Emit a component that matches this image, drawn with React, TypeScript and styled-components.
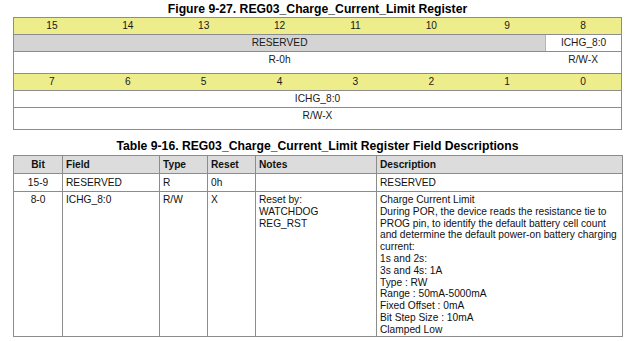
import React from "react";
import styled, { createGlobalStyle } from "styled-components";

const GlobalStyle = createGlobalStyle`
  body {
    margin: 0;
    background: #ffffff;
    font-family: "Liberation Sans", Arial, sans-serif;
    color: #111111;
  }
`;

type Tone = "yellow" | "gray" | "white";

const TONES: Record<Tone, string> = {
  yellow: "#eded8c",
  gray: "#d4d4d4",
  white: "#ffffff",
};

const BITS_HIGH = ["15", "14", "13", "12", "11", "10", "9", "8"];
const BITS_LOW = ["7", "6", "5", "4", "3", "2", "1", "0"];

const DESCRIPTION = [
  "Charge Current Limit",
  "During POR, the device reads the resistance tie to",
  "PROG pin, to identify the default battery cell count",
  "and determine the default power-on battery charging",
  "current:",
  "1s and 2s:",
  "3s and 4s: 1A",
  "Type : RW",
  "Range : 50mA-5000mA",
  "Fixed Offset : 0mA",
  "Bit Step Size : 10mA",
  "Clamped Low",
];

const App = () => {
  return (
    <Page>
      <GlobalStyle />
      <Caption>Figure 9-27. REG03_Charge_Current_Limit Register</Caption>
      <Register>
        <RegRow $h={16}>
          {BITS_HIGH.map((b) => (
            <RegCell key={b} $tone="yellow">
              {b}
            </RegCell>
          ))}
        </RegRow>
        <RegRow $h={16}>
          <RegCell $tone="gray" $span={7}>
            RESERVED
          </RegCell>
          <RegCell $tone="white" $divider>
            ICHG_8:0
          </RegCell>
        </RegRow>
        <RegRow $h={21}>
          <RegCell $tone="white" $span={7}>
            R-0h
          </RegCell>
          <RegCell $tone="white" $top>
            R/W-X
          </RegCell>
        </RegRow>
        <RegRow $h={16}>
          {BITS_LOW.map((b) => (
            <RegCell key={b} $tone="yellow">
              {b}
            </RegCell>
          ))}
        </RegRow>
        <RegRow $h={16}>
          <RegCell $tone="white" $span={8}>
            ICHG_8:0
          </RegCell>
        </RegRow>
        <RegRow $h={21}>
          <RegCell $tone="white" $span={8} $top>
            R/W-X
          </RegCell>
        </RegRow>
      </Register>

      <TableCaption>
        Table 9-16. REG03_Charge_Current_Limit Register Field Descriptions
      </TableCaption>
      <FieldTable>
        <colgroup>
          <col style={{ width: 49 }} />
          <col style={{ width: 97 }} />
          <col style={{ width: 48 }} />
          <col style={{ width: 48 }} />
          <col style={{ width: 121 }} />
          <col style={{ width: 246 }} />
        </colgroup>
        <thead>
          <HeadRow>
            <Th $center>Bit</Th>
            <Th>Field</Th>
            <Th>Type</Th>
            <Th>Reset</Th>
            <Th>Notes</Th>
            <Th>Description</Th>
          </HeadRow>
        </thead>
        <tbody>
          <BodyRow $h={18}>
            <Td $center>15-9</Td>
            <Td>RESERVED</Td>
            <Td>R</Td>
            <Td>0h</Td>
            <Td></Td>
            <Td>RESERVED</Td>
          </BodyRow>
          <BodyRow $h={144}>
            <Td $center $tall>
              8-0
            </Td>
            <Td $tall>ICHG_8:0</Td>
            <Td $tall>R/W</Td>
            <Td $tall>X</Td>
            <Td $tall>
              <Lines>
                <span>Reset by:</span>
                <span>WATCHDOG</span>
                <span>REG_RST</span>
              </Lines>
            </Td>
            <Td $tall>
              <Lines>
                {DESCRIPTION.map((line) => (
                  <span key={line}>{line}</span>
                ))}
              </Lines>
            </Td>
          </BodyRow>
        </tbody>
      </FieldTable>
    </Page>
  );
};

const Page = styled.div`
  width: 640px;
  height: 341px;
  overflow: hidden;
  padding-left: 13px;
  box-sizing: border-box;
`;

const Caption = styled.div`
  width: 609px;
  height: 17px;
  text-align: center;
  font: bold 12.2px/18px "Liberation Sans", Arial, sans-serif;
  color: #000;
`;

const TableCaption = styled(Caption)`
  margin-top: 8px;
  line-height: 17px;
`;

const Register = styled.div`
  width: 609px;
  box-sizing: border-box;
  border: 1px solid #8c8c8c;
  display: flex;
  flex-direction: column;
`;

const RegRow = styled.div<{ $h: number }>`
  display: grid;
  grid-template-columns: repeat(8, 1fr);
  height: ${(p) => p.$h}px;
  & + & {
    border-top: 1px solid #8c8c8c;
  }
`;

const RegCell = styled.div<{
  $tone: Tone;
  $span?: number;
  $divider?: boolean;
  $top?: boolean;
}>`
  grid-column: span ${(p) => p.$span ?? 1};
  background: ${(p) => TONES[p.$tone]};
  border-left: ${(p) => (p.$divider ? "1px solid #b4b4b4" : "none")};
  font-size: 10.2px;
  line-height: ${(p) => (p.$top ? "15px" : "16px")};
  text-align: center;
  color: #1a1a1a;
  white-space: nowrap;
`;

const FieldTable = styled.table`
  width: 609px;
  table-layout: fixed;
  border-collapse: collapse;
  border: 1px solid #7c7c7c;
  font-size: 10.2px;
  color: #111;
`;

const HeadRow = styled.tr`
  height: 18px;
  background: #dcdcdc;
`;

const BodyRow = styled.tr<{ $h: number }>`
  height: ${(p) => p.$h}px;
`;

const Th = styled.th<{ $center?: boolean }>`
  border: 1px solid #8c8c8c;
  padding: 0 3px;
  font-weight: bold;
  text-align: ${(p) => (p.$center ? "center" : "left")};
  line-height: 15px;
  white-space: nowrap;
`;

const Td = styled.td<{ $center?: boolean; $tall?: boolean }>`
  border: 1px solid #8c8c8c;
  padding: ${(p) => (p.$tall ? "2px 3px 0" : "0 3px")};
  text-align: ${(p) => (p.$center ? "center" : "left")};
  vertical-align: ${(p) => (p.$tall ? "top" : "middle")};
  line-height: 11.8px;
  white-space: nowrap;
  overflow: hidden;
`;

const Lines = styled.div`
  display: flex;
  flex-direction: column;
`;

export default App;
